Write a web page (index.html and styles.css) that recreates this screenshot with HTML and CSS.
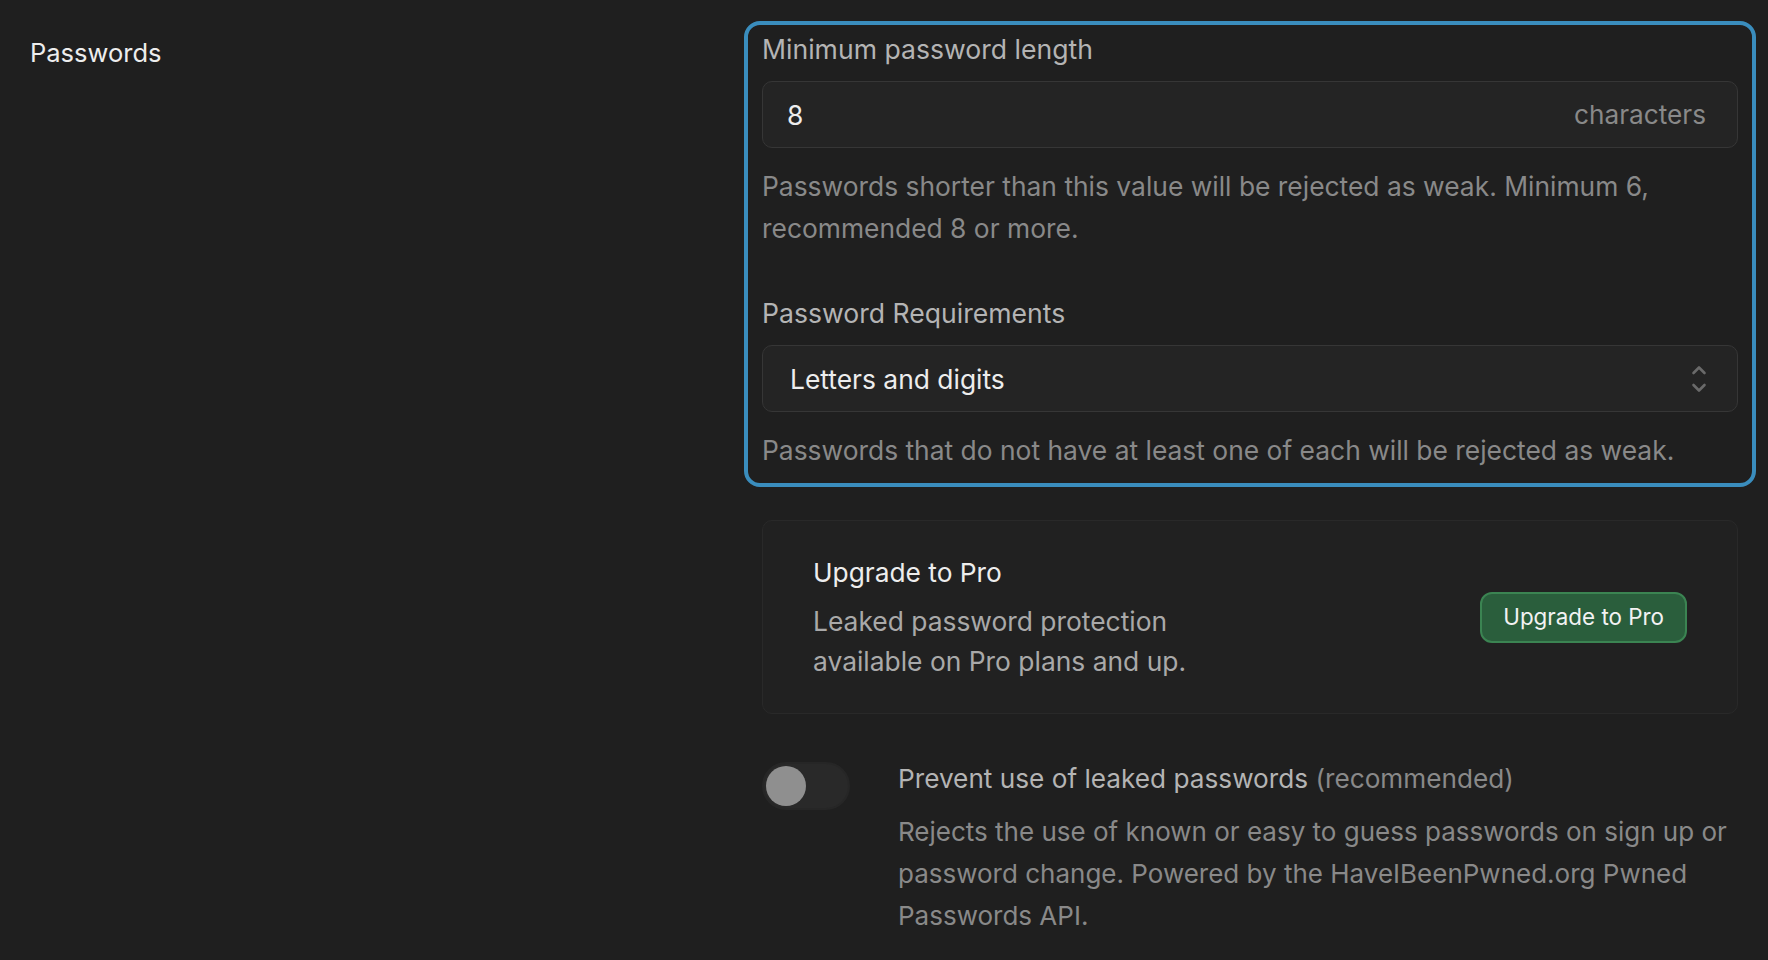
FILE: index.html
```html
<!DOCTYPE html>
<html lang="en">
<head>
<meta charset="utf-8">
<title>Passwords</title>
<link rel="stylesheet" href="styles.css">
</head>
<body>
<main class="page">
  <section class="settings-row">
    <h2 class="row-title">Passwords</h2>
    <div class="row-body">
      <div class="focus-group">
        <div class="field">
          <label class="field-label">Minimum password length</label>
          <div class="control">
            <span class="control-value">8</span>
            <span class="control-suffix">characters</span>
          </div>
          <p class="field-help">Passwords shorter than this value will be rejected as weak. Minimum 6, recommended 8 or more.</p>
        </div>
        <div class="field">
          <label class="field-label">Password Requirements</label>
          <div class="control">
            <span class="control-value select-value">Letters and digits</span>
            <svg class="chevrons" width="16" height="30" viewBox="0 0 16 30" aria-hidden="true">
              <path d="M2.5 9 L8 3.5 L13.5 9" fill="none" stroke="#6a6a6a" stroke-width="2.6" stroke-linecap="round" stroke-linejoin="round"/>
              <path d="M2.5 21 L8 26.5 L13.5 21" fill="none" stroke="#6a6a6a" stroke-width="2.6" stroke-linecap="round" stroke-linejoin="round"/>
            </svg>
          </div>
          <p class="field-help">Passwords that do not have at least one of each will be rejected as weak.</p>
        </div>
      </div>

      <div class="upgrade-card">
        <div class="upgrade-text">
          <div class="upgrade-title">Upgrade to Pro</div>
          <p class="upgrade-desc">Leaked password protection available on Pro plans and up.</p>
        </div>
        <button class="btn-upgrade" type="button">Upgrade to Pro</button>
      </div>

      <div class="toggle-row">
        <span class="toggle"><span class="toggle-knob"></span></span>
        <div class="toggle-text">
          <div class="toggle-label">Prevent use of leaked passwords <span class="toggle-hint">(recommended)</span></div>
          <p class="toggle-desc">Rejects the use of known or easy to guess passwords on sign up or password change. Powered by the HaveIBeenPwned.org Pwned Passwords API.</p>
        </div>
      </div>
    </div>
  </section>
</main>
</body>
</html>
```

FILE: styles.css
```css
* { box-sizing: border-box; }

html, body {
  margin: 0;
  padding: 0;
  background: #1f1f1f;
}

body {
  font-family: Inter, "Liberation Sans", sans-serif;
  color: #ededed;
  width: 1768px;
  height: 960px;
  overflow: hidden;
}

.page {
  padding: 21px 30px 0 30px;
}

.settings-row {
  display: grid;
  grid-template-columns: 1fr 976px;
}

.row-title {
  margin: 0;
  padding-top: 12px;
  font-size: 25.5px;
  font-weight: 400;
  line-height: 40px;
  color: #ededed;
}

.row-body {
  display: flex;
  flex-direction: column;
}

.focus-group {
  margin: 0 -18px;
  padding: 4px 14px 12px 14px;
  border: 4px solid #3a8dbd;
  border-radius: 16px;
  display: flex;
  flex-direction: column;
  gap: 44px;
}

.field {
  display: flex;
  flex-direction: column;
}

.field-label {
  font-size: 26.6px;
  line-height: 40px;
  color: #b4b4b4;
  margin-bottom: 12px;
}

.control {
  height: 67px;
  border: 1px solid #363636;
  border-radius: 10px;
  background: #242424;
  display: flex;
  align-items: center;
  justify-content: space-between;
  padding: 0 31px 0 24px;
}

.control-value {
  font-size: 26.4px;
  color: #ededed;
}

.select-value {
  padding-left: 3px;
}

.control-suffix {
  font-size: 26.2px;
  color: #898989;
}

.chevrons {
  display: block;
  margin-right: -1px;
}

.field-help {
  margin: 17px 0 0 0;
  font-size: 26.4px;
  line-height: 42px;
  color: #898989;
}

.upgrade-card {
  margin-top: 33px;
  border: 1px solid #292929;
  border-radius: 10px;
  background: #212121;
  padding: 32px 50px;
  display: flex;
  align-items: center;
  justify-content: space-between;
}

.upgrade-title {
  font-size: 26.3px;
  line-height: 40px;
  color: #ededed;
}

.upgrade-desc {
  margin: 8px 0 0 0;
  max-width: 440px;
  font-size: 26.4px;
  line-height: 40px;
  color: #a9a9a9;
}

.btn-upgrade {
  height: 51px;
  padding: 0 21px;
  border: 2px solid #3b8452;
  border-radius: 12px;
  background: #2a5e3c;
  color: #f2f2f2;
  font-family: inherit;
  font-size: 22.4px;
  line-height: 1;
  cursor: pointer;
}

.toggle-row {
  margin-top: 45px;
  display: flex;
  align-items: flex-start;
  gap: 48px;
}

.toggle {
  flex: none;
  margin-top: 3px;
  width: 88px;
  height: 48px;
  border-radius: 24px;
  background: #292929;
  border: 2px solid #262626;
  display: flex;
  align-items: center;
  padding-left: 2px;
}

.toggle-knob {
  width: 40px;
  height: 40px;
  border-radius: 50%;
  background: #8f8f8f;
}

.toggle-text {
  flex: 1;
}

.toggle-label {
  font-size: 26.2px;
  line-height: 40px;
  color: #b4b4b4;
}

.toggle-hint {
  color: #898989;
}

.toggle-desc {
  margin: 12px 0 0 0;
  font-size: 26px;
  line-height: 42px;
  color: #898989;
}
```
